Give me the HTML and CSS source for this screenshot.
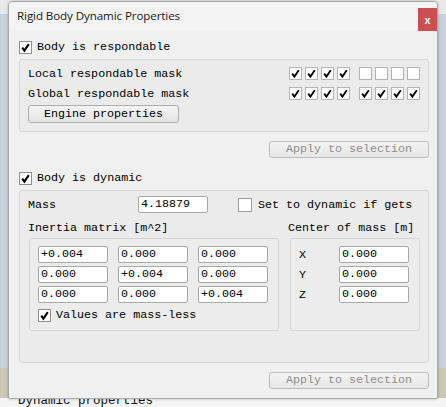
FILE: index.html
```html
<!DOCTYPE html>
<html>
<head>
<meta charset="utf-8">
<link rel="stylesheet" href="styles.css">
</head>
<body>
<div class="desktop">
  <div class="behind-text">Dynamic properties</div>
  <div class="window">
    <div class="titlebar">
      <span class="title">Rigid Body Dynamic Properties</span>
      <span class="close">x</span>
    </div>
    <div class="content">
      <label class="check-row top-check">
        <span class="cb on"><svg viewBox="0 0 11 11"><path d="M2.2 5.6 L4.4 8.6 L8.8 2.2"/></svg></span>
        <span>Body is respondable</span>
      </label>

      <div class="group group-resp">
        <div class="mask-row">
          <span class="mask-label">Local respondable mask</span>
          <div class="masks">
            <div class="mask-set">
              <span class="cb small on"><svg viewBox="0 0 11 11"><path d="M2.2 5.6 L4.4 8.6 L8.8 2.2"/></svg></span>
              <span class="cb small on"><svg viewBox="0 0 11 11"><path d="M2.2 5.6 L4.4 8.6 L8.8 2.2"/></svg></span>
              <span class="cb small on"><svg viewBox="0 0 11 11"><path d="M2.2 5.6 L4.4 8.6 L8.8 2.2"/></svg></span>
              <span class="cb small on"><svg viewBox="0 0 11 11"><path d="M2.2 5.6 L4.4 8.6 L8.8 2.2"/></svg></span>
            </div>
            <div class="mask-set">
              <span class="cb small"></span>
              <span class="cb small"></span>
              <span class="cb small"></span>
              <span class="cb small"></span>
            </div>
          </div>
        </div>
        <div class="mask-row">
          <span class="mask-label">Global respondable mask</span>
          <div class="masks">
            <div class="mask-set">
              <span class="cb small on"><svg viewBox="0 0 11 11"><path d="M2.2 5.6 L4.4 8.6 L8.8 2.2"/></svg></span>
              <span class="cb small on"><svg viewBox="0 0 11 11"><path d="M2.2 5.6 L4.4 8.6 L8.8 2.2"/></svg></span>
              <span class="cb small on"><svg viewBox="0 0 11 11"><path d="M2.2 5.6 L4.4 8.6 L8.8 2.2"/></svg></span>
              <span class="cb small on"><svg viewBox="0 0 11 11"><path d="M2.2 5.6 L4.4 8.6 L8.8 2.2"/></svg></span>
            </div>
            <div class="mask-set">
              <span class="cb small on"><svg viewBox="0 0 11 11"><path d="M2.2 5.6 L4.4 8.6 L8.8 2.2"/></svg></span>
              <span class="cb small on"><svg viewBox="0 0 11 11"><path d="M2.2 5.6 L4.4 8.6 L8.8 2.2"/></svg></span>
              <span class="cb small on"><svg viewBox="0 0 11 11"><path d="M2.2 5.6 L4.4 8.6 L8.8 2.2"/></svg></span>
              <span class="cb small on"><svg viewBox="0 0 11 11"><path d="M2.2 5.6 L4.4 8.6 L8.8 2.2"/></svg></span>
            </div>
          </div>
        </div>
        <button class="btn engine">Engine properties</button>
      </div>

      <div class="apply-row first-apply">
        <button class="btn apply" disabled>Apply to selection</button>
      </div>

      <label class="check-row dyn-check">
        <span class="cb on"><svg viewBox="0 0 11 11"><path d="M2.2 5.6 L4.4 8.6 L8.8 2.2"/></svg></span>
        <span>Body is dynamic</span>
      </label>

      <div class="group group-dyn">
        <div class="mass-row">
          <span class="mass-label">Mass</span>
          <span class="field mass-field">4.18879</span>
          <span class="cb gets-cb"></span>
          <span class="gets-label">Set to dynamic if gets</span>
        </div>

        <div class="sub-cols">
          <div class="col inertia-col">
            <div class="sub-title">Inertia matrix [m^2]</div>
            <div class="subgroup inertia">
              <div class="matrix">
                <span class="field">+0.004</span>
                <span class="field">0.000</span>
                <span class="field">0.000</span>
                <span class="field">0.000</span>
                <span class="field">+0.004</span>
                <span class="field">0.000</span>
                <span class="field">0.000</span>
                <span class="field">0.000</span>
                <span class="field">+0.004</span>
              </div>
              <label class="check-row massless">
                <span class="cb on"><svg viewBox="0 0 11 11"><path d="M2.2 5.6 L4.4 8.6 L8.8 2.2"/></svg></span>
                <span>Values are mass-less</span>
              </label>
            </div>
          </div>
          <div class="col center-col">
            <div class="sub-title">Center of mass [m]</div>
            <div class="subgroup center">
              <div class="xyz-row"><span class="axis">X</span><span class="field">0.000</span></div>
              <div class="xyz-row"><span class="axis">Y</span><span class="field">0.000</span></div>
              <div class="xyz-row"><span class="axis">Z</span><span class="field">0.000</span></div>
            </div>
          </div>
        </div>
      </div>

      <div class="apply-row second-apply">
        <button class="btn apply" disabled>Apply to selection</button>
      </div>
    </div>
  </div>
</div>
</body>
</html>
```

FILE: styles.css
```css
* { box-sizing: border-box; }

html, body {
  margin: 0;
  padding: 0;
  width: 446px;
  height: 407px;
  overflow: hidden;
}

body {
  font-family: "Liberation Mono", "DejaVu Sans Mono", monospace;
  font-size: 11.7px;
  color: #000;
}

.desktop {
  position: relative;
  width: 446px;
  height: 407px;
  background: linear-gradient(to bottom, #e9e9e9 0 14px, #c6d1dd 14px 368px, #cbc7b5 368px 398px, #f4f4f4 398px);
}

.behind-text {
  position: absolute;
  left: 18px;
  top: 394px;
  font-size: 12.5px;
  color: #111;
}

.window {
  position: absolute;
  left: 8px;
  top: 1px;
  width: 430px;
  height: 398px;
  background: #f0f0f0;
  border: 1px solid #a9a9a9;
  border-radius: 5px 5px 2px 2px;
  box-shadow: 0 0 3px rgba(0, 0, 0, 0.25);
  display: flex;
  flex-direction: column;
  overflow: hidden;
}

.titlebar {
  height: 29px;
  flex: none;
  background: #f3f3f3;
  display: flex;
  align-items: flex-start;
  position: relative;
}

.title {
  font-family: "Open Sans", "Liberation Sans", sans-serif;
  font-size: 11.6px;
  color: #1a1a1a;
  padding-left: 8px;
  padding-top: 6px;
  letter-spacing: -0.1px;
}

.close {
  position: absolute;
  right: 0;
  top: 6px;
  width: 19px;
  height: 23px;
  background: #c75050;
  color: #fff;
  font-family: "Liberation Sans", sans-serif;
  font-weight: bold;
  font-size: 11px;
  display: flex;
  align-items: center;
  justify-content: center;
}

.content {
  padding: 0 8px 0 10px;
  display: flex;
  flex-direction: column;
}

/* checkboxes */
.check-row {
  display: flex;
  align-items: center;
  gap: 5px;
  height: 14px;
  white-space: pre;
}

.cb {
  width: 13px;
  height: 13px;
  flex: none;
  background: #fff;
  border: 1px solid #8e8f8f;
  display: inline-flex;
  align-items: center;
  justify-content: center;
}

.cb svg {
  width: 11px;
  height: 11px;
  display: block;
}

.cb svg path {
  fill: none;
  stroke: #000;
  stroke-width: 2.1;
  stroke-linecap: butt;
  stroke-linejoin: miter;
}

.cb.small {
  border-color: #b4b4b4;
}

.cb.small svg path {
  stroke-width: 1.8;
}

.top-check { margin-top: 9px; }

/* group boxes */
.group {
  border: 1px solid #d5d5d5;
  border-radius: 3px;
  background: #ebebeb;
}

.group-resp {
  margin-top: 5px;
  height: 73px;
  padding: 7px 8px 0 8px;
  display: flex;
  flex-direction: column;
}

.mask-row {
  display: flex;
  align-items: center;
  justify-content: space-between;
  height: 13px;
  margin-bottom: 7px;
  white-space: pre;
}

.masks {
  display: flex;
  gap: 9px;
}

.mask-set {
  display: flex;
  gap: 3px;
}

.btn {
  font-family: "Liberation Mono", "DejaVu Sans Mono", monospace;
  font-size: 11.7px;
  border: 1px solid #adadad;
  border-radius: 3px;
  background: linear-gradient(to bottom, #f4f4f4, #e4e4e4);
  color: #000;
  padding: 0;
  height: 18px;
  line-height: 16px;
}

.engine {
  width: 151px;
  margin-top: -2px;
}

.apply-row {
  display: flex;
  justify-content: flex-end;
}

.apply {
  width: 160px;
  height: 17px;
  line-height: 15px;
  color: #8d8d8d;
  border-color: #bdbdbd;
  background: linear-gradient(to bottom, #f3f3f3, #e7e7e7);
}

.first-apply { margin-top: 9px; }

.dyn-check { margin-top: 13px; }

.group-dyn {
  margin-top: 5px;
  height: 173px;
  padding: 5px 9px 0 8px;
}

.field {
  display: block;
  background: #fff;
  border: 1px solid #a8a8a8;
  border-radius: 2px;
  height: 17px;
  line-height: 15px;
  padding-left: 2px;
  white-space: pre;
}

.mass-row {
  display: flex;
  align-items: center;
  height: 17px;
}

.mass-label { width: 110px; }

.mass-field { width: 70px; }

.gets-cb {
  margin-left: 30px;
  width: 14px;
  height: 14px;
  border-color: #a0a0a0;
}

.gets-label {
  margin-left: 6px;
  white-space: pre;
}

.sub-cols {
  display: flex;
  gap: 11px;
  margin-top: 8px;
  margin-left: 1px;
}

.col {
  display: flex;
  flex-direction: column;
}

.sub-title {
  height: 14px;
  line-height: 14px;
  margin-left: -1px;
  margin-bottom: 3px;
  white-space: pre;
}

.subgroup {
  border: 1px solid #d5d5d5;
  border-radius: 3px;
  background: #ececec;
  height: 93px;
}

.inertia {
  width: 250px;
  padding: 7px 8px 0 8px;
}

.matrix {
  display: grid;
  grid-template-columns: 70px 70px 70px;
  column-gap: 10px;
  row-gap: 3px;
}

.massless { margin-top: 5px; }

.center-col .sub-title { margin-left: -2px; }

.center {
  width: 130px;
  padding: 7px 10px 0 8px;
  display: flex;
  flex-direction: column;
  gap: 3px;
}

.xyz-row {
  display: flex;
  align-items: center;
  justify-content: space-between;
}

.xyz-row .field { width: 70px; }

.second-apply { margin-top: 9px; }
```
